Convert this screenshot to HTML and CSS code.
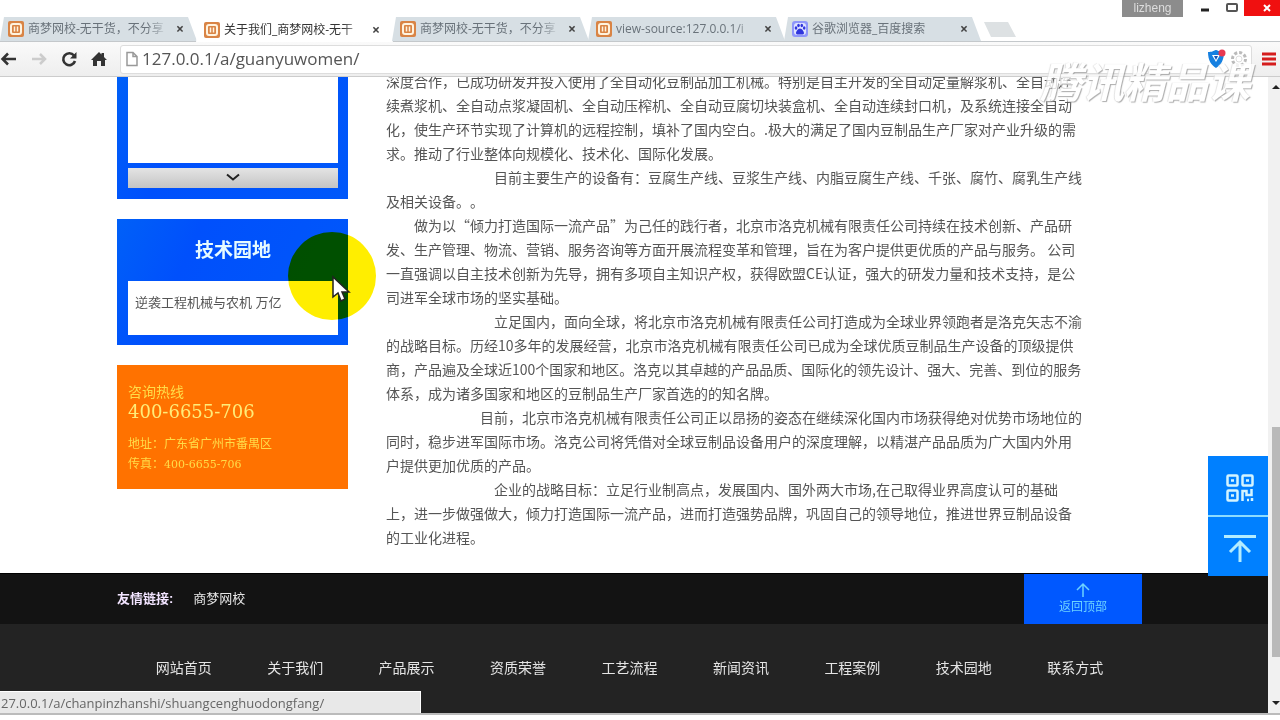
FILE: index.html
```html
<!DOCTYPE html>
<html lang="zh-CN">
<head>
<meta charset="utf-8">
<title>关于我们_商梦网校</title>
<link rel="stylesheet" href="styles.css">
</head>
<body>
<svg class="defs" aria-hidden="true">
  <symbol id="fav" viewBox="0 0 16 16"><rect width="16" height="16" rx="2" fill="#d98445"/><rect x="3" y="3" width="10" height="10" rx="2" fill="none" stroke="#fff3df" stroke-width="2"/><path d="M6.500 5.500v5M9.500 5.500v5" stroke="#fff3df" stroke-width="1.500"/></symbol>
  <symbol id="paw" viewBox="0 0 16 16"><rect width="16" height="16" rx="3" fill="#8f96fa"/><rect x="2" y="2" width="12" height="12" rx="3" fill="#dfe3ff"/><g fill="#3036dc"><ellipse cx="4" cy="7" rx="1.300" ry="1.800"/><ellipse cx="6.500" cy="4.500" rx="1.300" ry="1.700"/><ellipse cx="9.800" cy="4.500" rx="1.300" ry="1.700"/><ellipse cx="12.200" cy="7" rx="1.300" ry="1.800"/><path d="M8 7.500c2 0 4 3 4 4.500 0 2-2 1.500-4 1.500s-4 .5-4-1.500c0-1.500 2-4.500 4-4.500z"/></g></symbol>
</svg>

<header class="browser">
  <div class="window-controls">
    <span class="user">lizheng</span>
    <button class="win" aria-label="最小化"><svg width="12" height="16" viewBox="0 0 12 16"><path d="M2 10h8" stroke="#222" stroke-width="3"/></svg></button>
    <button class="win" aria-label="最大化"><svg width="14" height="16" viewBox="0 0 14 16"><rect x="2" y="4" width="10" height="7" rx="1" fill="none" stroke="#555" stroke-width="2"/></svg></button>
    <button class="win close" aria-label="关闭"><svg width="10" height="16" viewBox="0 0 10 16"><path d="M2 5l6 6M8 5l-6 6" stroke="#fff" stroke-width="2"/></svg></button>
  </div>
  <nav class="tabs">
    <div class="tab"><svg class="ico"><use href="#fav"/></svg><span>商梦网校-无干货，不分享</span><button aria-label="关闭标签">×</button></div>
    <div class="tab active"><svg class="ico"><use href="#fav"/></svg><span>关于我们_商梦网校-无干</span><button aria-label="关闭标签">×</button></div>
    <div class="tab"><svg class="ico"><use href="#fav"/></svg><span>商梦网校-无干货，不分享</span><button aria-label="关闭标签">×</button></div>
    <div class="tab"><svg class="ico"><use href="#fav"/></svg><span>view-source:127.0.0.1/i</span><button aria-label="关闭标签">×</button></div>
    <div class="tab"><svg class="ico"><use href="#paw"/></svg><span>谷歌浏览器_百度搜索</span><button aria-label="关闭标签">×</button></div>
    <button class="new-tab" aria-label="新标签页"></button>
  </nav>
  <div class="toolbar">
    <button class="tool" aria-label="后退"><svg width="18" height="18" viewBox="0 0 18 18"><path d="M16 9H3M8 3.500L2.500 9 8 14.500" fill="none" stroke="#333" stroke-width="2.500"/></svg></button>
    <button class="tool" aria-label="前进"><svg width="18" height="18" viewBox="0 0 18 18"><path d="M2 9h12M10 4l5 5-5 5" fill="none" stroke="#ccc" stroke-width="2.500"/></svg></button>
    <button class="tool" aria-label="刷新"><svg width="18" height="18" viewBox="0 0 18 18"><path d="M14 5.500A6 6 0 1 0 15 11" fill="none" stroke="#333" stroke-width="2.600"/><path d="M16.500 2v6.500H10z" fill="#333"/></svg></button>
    <button class="tool" aria-label="主页"><svg width="18" height="18" viewBox="0 0 18 18"><path d="M9 2l2.500 2.500V3H14v4l3 3h-2v6h-4v-5H7v5H3v-6H1z" fill="#333"/></svg></button>
    <div class="address">
      <svg width="14" height="16" viewBox="0 0 14 16"><path d="M2 1.500h6l4 4v9H2zM8 1.500v4h4" fill="#fff" stroke="#999" stroke-width="1.500"/></svg>
      <input type="text" aria-label="地址" value="127.0.0.1/a/guanyuwomen/">
      <svg width="20" height="20" viewBox="0 0 20 20"><path d="M2 3c4 0 5-1 8-2 3 1 4 2 8 2 0 8-3 13-8 16C5 16 2 11 2 3z" fill="#1680e0"/><path d="M6 6h8l-4 7z" fill="#fff"/><path d="M8 7h4l-2 4z" fill="#1455b8"/><circle cx="16" cy="4" r="3.500" fill="#e83850"/></svg>
      <svg width="20" height="20" viewBox="0 0 20 20"><circle cx="10" cy="10" r="6.500" fill="none" stroke="#bbb" stroke-width="3" stroke-dasharray="3 2"/><circle cx="10" cy="10" r="3" fill="none" stroke="#ddd"/></svg>
    </div>
    <button class="tool menu" aria-label="菜单"><svg width="14" height="16" viewBox="0 0 14 16"><path d="M0 3h14M0 8h14M0 13h14" stroke="#d51d1d" stroke-width="3"/></svg></button>
  </div>
</header>

<div class="viewport">
  <div class="page">
    <main class="content">
      <aside class="sidebar">
        <section class="card list-card">
          <div class="list-body"></div>
          <button class="more" aria-label="展开"><svg width="16" height="10" viewBox="0 0 16 10"><path d="M2 1.500l6 5 6-5" fill="none" stroke="#222" stroke-width="2"/></svg></button>
        </section>
        <section class="card">
          <h2>技术园地</h2>
          <div class="topic"><a href="#">逆袭工程机械与农机 万亿</a></div>
        </section>
        <section class="hotline">
          <h3>咨询热线</h3>
          <p class="phone">400-6655-706</p>
          <p>地址：广东省广州市番禺区</p>
          <p>传真：<span class="fax">400-6655-706</span></p>
        </section>
      </aside>
      <article class="article">
        <p>深度合作，已成功研发并投入使用了全自动化豆制品加工机械。特别是自主开发的全自动定量解浆机、全自动连<br>续煮浆机、全自动点浆凝固机、全自动压榨机、全自动豆腐切块装盒机、全自动连续封口机，及系统连接全自动<br>化，使生产环节实现了计算机的远程控制，填补了国内空白。.极大的满足了国内豆制品生产厂家对产业升级的需<br>求。推动了行业整体向规模化、技术化、国际化发展。</p>
        <p class="far">目前主要生产的设备有：豆腐生产线、豆浆生产线、内脂豆腐生产线、千张、腐竹、腐乳生产线<br>及相关设备。。</p>
        <p class="near">做为以“倾力打造国际一流产品”为己任的践行者，北京市洛克机械有限责任公司持续在技术创新、产品研<br>发、生产管理、物流、营销、服务咨询等方面开展流程变革和管理，旨在为客户提供更优质的产品与服务。 公司<br>一直强调以自主技术创新为先导，拥有多项自主知识产权，获得欧盟CE认证，强大的研发力量和技术支持，是公<br>司进军全球市场的坚实基础。</p>
        <p class="far">立足国内，面向全球，将北京市洛克机械有限责任公司打造成为全球业界领跑者是洛克矢志不渝<br>的战略目标。历经10多年的发展经营，北京市洛克机械有限责任公司已成为全球优质豆制品生产设备的顶级提供<br>商，产品遍及全球近100个国家和地区。洛克以其卓越的产品品质、国际化的领先设计、强大、完善、到位的服务<br>体系，成为诸多国家和地区的豆制品生产厂家首选的的知名牌。</p>
        <p class="mid">目前，北京市洛克机械有限责任公司正以昂扬的姿态在继续深化国内市场获得绝对优势市场地位的<br>同时，稳步进军国际市场。洛克公司将凭借对全球豆制品设备用户的深度理解，以精湛产品品质为广大国内外用<br>户提供更加优质的产品。</p>
        <p class="far">企业的战略目标：立足行业制高点，发展国内、国外两大市场,在己取得业界高度认可的基础<br>上，进一步做强做大，倾力打造国际一流产品，进而打造强势品牌，巩固自己的领导地位，推进世界豆制品设备<br>的工业化进程。</p>
      </article>
    </main>
    <footer>
      <div class="links"><strong>友情链接:</strong><a href="#">商梦网校</a>
        <a class="back-top" href="#"><svg width="16" height="16" viewBox="0 0 16 16"><path d="M8 15V2M2 8l6-6 6 6" fill="none" stroke="#6cd2ff" stroke-width="1.500"/></svg>返回顶部</a></div>
      <nav class="site-nav"><a href="#">网站首页</a><a href="#">关于我们</a><a href="#">产品展示</a><a href="#">资质荣誉</a><a href="#">工艺流程</a><a href="#">新闻资讯</a><a href="#">工程案例</a><a href="#">技术园地</a><a href="#">联系方式</a></nav>
    </footer>
  </div>
  <div class="scrollbar"><svg width="8" height="6" viewBox="0 0 8 6"><path d="M0 5l4-4 4 4z" fill="#222"/></svg><div class="thumb"></div><svg width="8" height="6" viewBox="0 0 8 6"><path d="M0 1l4 4 4-4z" fill="#222"/></svg></div>
  <div class="floating">
    <button aria-label="二维码"><svg width="28" height="28" viewBox="0 0 28 28" fill="none" stroke="#d4f4ff" stroke-width="2.500"><rect x="1.500" y="1.500" width="10" height="10" rx="1"/><rect x="16.500" y="1.500" width="10" height="10" rx="1"/><rect x="1.500" y="16.500" width="10" height="10" rx="1"/><path d="M5 6.500h3M20 6.500h3M5 21.500h3M16.500 27V17h4v4h5v-6M21 26h2M26 24v3"/></svg></button>
    <button aria-label="返回顶部"><svg width="32" height="28" viewBox="0 0 32 28" fill="none" stroke="#b4ecff" stroke-width="3"><path d="M0 1.500h32M16 27V7M6 17L16 7l10 10"/></svg></button>
  </div>
  <div class="status">27.0.0.1/a/chanpinzhanshi/shuangcenghuodongfang/</div>
</div>
<div class="window-edge"></div>
<div class="watermark">腾讯精品课</div>
<div class="spotlight"></div>
<svg class="cursor" width="20" height="28" viewBox="0 0 20 28"><path d="M2 2v20l5-4 3 8 4-2-3-7h7z" fill="#fff" stroke="#222" stroke-width="1.500"/></svg>
</body>
</html>
```
FILE: styles.css
```css
* { box-sizing: border-box; }
body {
  margin: 0;
  height: 100vh;
  display: flex;
  flex-direction: column;
  position: relative;
  overflow: hidden;
  background: #fff;
  color: #555;
  font: 14px/24px "Liberation Sans", "Noto Sans CJK SC", sans-serif;
}
.defs { position: absolute; width: 0; height: 0; }
button { border: 0; padding: 0; background: none; font: inherit; color: inherit; display: flex; align-items: center; justify-content: center; }
a { color: inherit; text-decoration: none; }
h2, h3, p { margin: 0; font-weight: normal; }
svg { flex: none; }

.window-controls { display: flex; justify-content: flex-end; height: 17px; }
.user { width: 61px; background: #8c8c8c; color: #ddd; font-size: 12px; line-height: 16px; text-align: center; margin-right: 8px; }
.win { width: 27px; height: 16px; }
.win.close { width: 36px; margin-left: -1px; padding-left: 10px; background: #f01010; }
.tabs { display: flex; height: 25px; border-bottom: 1px solid #c4c8cb; }
.tab {
  width: 200px;
  margin-right: -4px;
  padding: 0 14px 0 8px;
  display: flex;
  align-items: center;
  gap: 4px;
  background: #d7dfe4;
  color: #69727a;
  font: 12px/24px "Open Sans", "Noto Sans CJK SC", sans-serif;
  clip-path: polygon(4px 0, 188px 0, 197px 100%, 0 100%);
}
.tab.active { background: #fff; color: #333; height: 25px; }
.tab span { width: 140px; overflow: hidden; white-space: nowrap; mask-image: linear-gradient(to right, #000 85%, transparent); }
.tab button { margin-left: 4px; color: #444; font-size: 14px; font-weight: bold; }
.ico { width: 16px; height: 16px; }
.new-tab { width: 32px; height: 15px; margin: 5px 0 0 4px; background: #dde1e3; clip-path: polygon(0 0, 24px 0, 100% 100%, 7px 100%); }
.toolbar { display: flex; align-items: center; height: 35px; padding-right: 4px; background: linear-gradient(#fafafa, #eee); border-bottom: 1px solid #ccc; }
.tool { width: 18px; margin-right: 12px; }
.tool.menu { width: 14px; margin: 0 0 0 10px; }
.address { flex: 1; height: 29px; display: flex; align-items: center; gap: 3px; padding: 0 2px 0 4px; background: #fff; border: 1px solid #ddd; border-radius: 3px; }
.address input { flex: 1; border: 0; padding: 0; background: none; color: #555; font: 17px/24px "Open Sans", sans-serif; }

.viewport { flex: 1; min-height: 0; display: flex; position: relative; overflow: hidden; }
.page { flex: 1; min-width: 0; }
.content { display: flex; gap: 38px; padding: 0 126px 24px 117px; }
.sidebar { width: 231px; flex: none; display: flex; flex-direction: column; gap: 20px; }
.card { padding: 0 10px 10px 11px; background: linear-gradient(115deg, #0060f8, #0050fc 30%, #0058fa); }
.card.list-card { padding-bottom: 11px; }
.list-body { height: 86px; background: #fff; }
.more { width: 100%; height: 20px; margin-top: 5px; background: linear-gradient(#e4e4e4, #c4c4c4); }
.card h2 { padding: 20px 0 18px; color: #e6fbff; font-size: 19px; font-weight: bold; text-align: center; }
.topic { padding: 10px 7px 20px; background: #fff; font-size: 13px; }
.hotline { padding: 17px 11px 14px; background: #ff7200; color: #ffdc48; font-size: 12px; line-height: 20px; }
.hotline h3 { font-size: 14px; }
.hotline .phone { margin-bottom: 12px; font: 18px/20px "DejaVu Serif", serif; color: #ffec78; }
.fax { font: 11px/20px "DejaVu Serif", serif; }
.article { flex: 1; margin-top: -8px; white-space: nowrap; font-family: "Noto Sans CJK SC", sans-serif; text-spacing-trim: space-all; }
.near { text-indent: 28px; }
.mid { text-indent: 94px; }
.far { text-indent: 108px; }

footer { background: #232323; color: #e4e4e4; border-top: 1px solid #000; }
.links { display: flex; align-items: center; gap: 20px; height: 50px; padding: 0 126px 0 117px; background: #131313; font-size: 13px; }
.links strong { color: #f2e4ff; }
.back-top { width: 118px; height: 50px; margin-left: auto; padding-top: 8px; display: flex; flex-direction: column; align-items: center; background: #0058ff; color: #6cd2ff; font-size: 12px; line-height: 18px; }
.site-nav { display: grid; grid-template-columns: repeat(9, 1fr); padding: 32px 137px 40px 128px; text-align: center; }

.scrollbar { width: 12px; padding: 7px 0; display: flex; flex-direction: column; align-items: flex-end; background: #f1f1f1; }
.thumb { width: 8px; height: 37%; margin: auto 0 43px; background: #b9b9b9; }
.floating { position: absolute; right: 12px; bottom: 137px; display: grid; gap: 2px; background: #8cdcff; }
.floating button { width: 60px; height: 59px; padding: 4px 0 0 4px; background: #0080ff; }
.status { position: absolute; left: 0; bottom: 0; width: 421px; height: 22px; background: #e8e8e8; border-top: 1px solid #fff; border-right: 1px solid #fff; color: #666; font: 13px/22px "Open Sans", sans-serif; padding-left: 1px; }
.window-edge { height: 7px; border-top: 2px solid #bbb; background: #fff; }
.watermark { position: absolute; right: 30px; top: 54px; color: #fff; font: italic bold 42px/52px "Noto Sans CJK SC", sans-serif; text-shadow: 1px 1px 1px #999, -1px 0 1px #ddd; opacity: .8; }
.spotlight { position: absolute; left: 288px; top: 232px; width: 88px; height: 88px; border-radius: 50%; background: #ffee00; mix-blend-mode: multiply; }
.cursor { position: absolute; left: 331px; top: 275px; }
```
